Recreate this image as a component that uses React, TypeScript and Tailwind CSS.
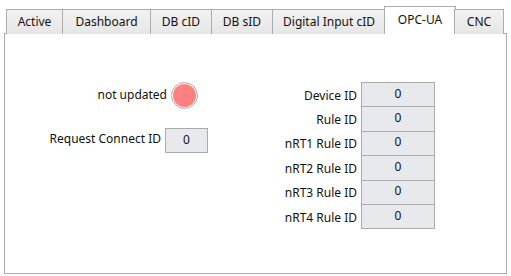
import React from "react";

const tabs = [
  { name: "Active", w: "w-[57px]" },
  { name: "Dashboard", w: "w-[89px]" },
  { name: "DB cID", w: "w-[62px]" },
  { name: "DB sID", w: "w-[62px]" },
  { name: "Digital Input cID", w: "w-[114px]" },
  { name: "OPC-UA", w: "w-[72px]", active: true },
  { name: "CNC", w: "w-[50px]" },
];

const ids = ["Device ID", "Rule ID", "nRT1 Rule ID", "nRT2 Rule ID", "nRT3 Rule ID", "nRT4 Rule ID"];

function ValueBox({ className }: { className: string }) {
  return (
    <div
      className={`${className} flex items-center justify-center border border-[#ababab] bg-[#e7e9ec] pb-[2px] text-[12px] text-[#111]`}
    >
      0
    </div>
  );
}

export default function App() {
  return (
    <div
      className="relative h-[276px] w-[511px] overflow-hidden bg-white pt-[9px] text-[12px] text-[#111]"
      style={{ fontFamily: '"Noto Sans", "Open Sans", sans-serif' }}
    >
      {/* Tabs */}
      <div className="relative z-10 flex h-[25px] items-end pl-[6px]">
        {tabs.map((t, i) =>
          t.active ? (
            <div
              key={t.name}
              className={`${t.w} -ml-[2px] -mr-[1px] flex h-[28px] items-start justify-center border border-b-0 border-[#acacac] bg-white pt-[4px]`}
            >
              {t.name}
            </div>
          ) : (
            <div
              key={t.name}
              className={`${t.w} ${i === 0 ? "" : "-ml-px"} flex h-[25px] items-center justify-center border border-b-0 border-[#acacac] bg-gradient-to-b from-[#f2f2f2] to-[#e6e6e6] pb-[1px]`}
            >
              {t.name}
            </div>
          )
        )}
      </div>

      {/* Panel */}
      <div className="mx-[4px] -mt-px flex h-[241px] border border-[#acacac] pt-[48px]">
        {/* Left column */}
        <div className="flex w-[203px] flex-col items-end">
          <div className="mr-[10px] flex items-center gap-[4px]">
            <span className="pb-[2px]">not updated</span>
            <div className="h-[27px] w-[27px] rounded-full border border-[#a8a8a8] bg-white p-px">
              <div className="h-full w-full rounded-full bg-[#ff8080]" />
            </div>
          </div>
          <div className="mt-[19px] flex items-center gap-[4px]">
            <span className="pb-[3px]">Request Connect ID</span>
            <ValueBox className="h-[25px] w-[43px]" />
          </div>
        </div>

        {/* Right column */}
        <div className="flex w-[227px] flex-col">
          {ids.map((id, i) => (
            <div key={id} className={`flex items-center justify-end gap-[4px] ${i === 0 ? "" : "-mt-px"}`}>
              <span className="pt-[2px]">{id}</span>
              <ValueBox className="h-[25.4px] w-[74px]" />
            </div>
          ))}
        </div>
      </div>
    </div>
  );
}
